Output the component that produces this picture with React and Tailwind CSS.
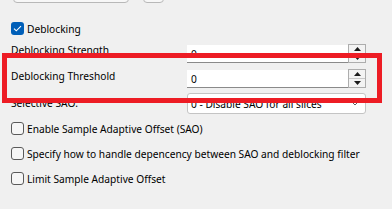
import React from "react";

function Spin({ value }) {
  return (
    <div className="flex h-[19px] w-[179px] shrink-0">
      <div className="mt-[1px] flex h-[18px] w-[161px] items-center border-b border-[#8a8a8a] bg-white pl-[4px]">
        {value}
      </div>
      <div className="flex h-[19px] w-[18px] flex-col border border-[#adadad] bg-[#f3f3f3]">
        <div className="flex flex-1 items-center justify-center border-b border-[#c8c8c8]">
          <svg width="7" height="4" viewBox="0 0 7 4"><path d="M3.5 0 L7 4 L0 4 Z" fill="#1a1a1a" /></svg>
        </div>
        <div className="flex flex-1 items-center justify-center">
          <svg width="7" height="4" viewBox="0 0 7 4"><path d="M0 0 L7 0 L3.5 4 Z" fill="#1a1a1a" /></svg>
        </div>
      </div>
    </div>
  );
}

function Check({ label }) {
  return (
    <div className="flex h-[13px] items-center">
      <div className="ml-[11px] h-[13px] w-[13px] shrink-0 rounded-[3px] border border-[#5a5a5a] bg-[#f6f6f6]" />
      <span className="ml-[3px] whitespace-nowrap">{label}</span>
    </div>
  );
}

export default function App() {
  return (
    <div className="relative h-[209px] w-[392px] overflow-hidden bg-[#f0f0f0] font-['Noto_Sans',sans-serif] text-[10.2px] leading-[16px] text-black">
      {/* partial buttons from above */}
      <div className="mt-[-18px] flex h-[21px]">
        <div className="ml-[13px] h-[21px] w-[116px] rounded-[4px] border border-[#b8b8b8] bg-[#f7f7f7]" />
        <div className="ml-[14px] h-[21px] w-[21px] rounded-[4px] border border-[#b8b8b8] bg-[#f7f7f7]" />
      </div>

      {/* Deblocking checked */}
      <div className="mt-[19px] flex h-[13px] items-center">
        <div className="ml-[11px] flex h-[13px] w-[13px] shrink-0 items-center justify-center rounded-[3px] bg-[#005fb8]">
          <svg width="9" height="7" viewBox="0 0 9 7">
            <path d="M1 3.6 L3.3 5.8 L8 1.2" fill="none" stroke="white" strokeWidth="1.1" />
          </svg>
        </div>
        <span className="ml-[3px]">Deblocking</span>
      </div>

      {/* Deblocking Strength */}
      <div className="mt-[9px] flex h-[19px] items-start">
        <span className="ml-[11px] mt-[-2px] w-[176px] whitespace-nowrap">Deblocking Strength</span>
        <Spin value="0" />
      </div>

      {/* Deblocking Threshold */}
      <div className="mt-[6px] flex h-[19px] items-start">
        <span className="ml-[11px] mt-[-1px] w-[176px] whitespace-nowrap">Deblocking Threshold</span>
        <Spin value="0" />
      </div>

      {/* Selective SAO */}
      <div className="mt-[5px] flex h-[21px] items-start">
        <span className="ml-[11px] mt-[2px] w-[176px] whitespace-nowrap">Selective SAO:</span>
        <div className="flex h-[21px] w-[179px] shrink-0 items-center justify-between rounded-[3px] border border-[#c4c4c4] bg-white pl-[3px] pr-[6px]">
          <span className="whitespace-nowrap">0 - Disable SAO for all slices</span>
          <svg width="8" height="5" viewBox="0 0 8 5">
            <path d="M0.5 0.5 L4 4 L7.5 0.5" fill="none" stroke="#606060" strokeWidth="1" />
          </svg>
        </div>
      </div>

      <div className="mt-[8px] flex flex-col gap-[12px]">
        <Check label="Enable Sample Adaptive Offset (SAO)" />
        <Check label="Specify how to handle depencency between SAO and deblocking filter" />
        <Check label="Limit Sample Adaptive Offset" />
      </div>

      {/* red annotation rectangle */}
      <div className="pointer-events-none absolute left-[2px] top-[53px] h-[50px] w-[380px] border-[5px] border-[#ed1c24]" />
    </div>
  );
}
